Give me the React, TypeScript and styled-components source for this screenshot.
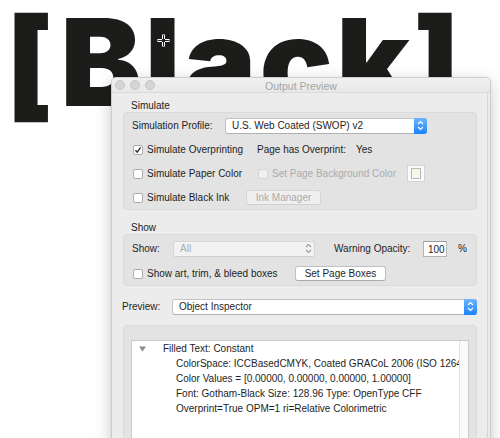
import React from 'react';
import styled, { createGlobalStyle } from 'styled-components';

/* ------------------------------ Global styles ----------------------------- */
const GlobalStyle = createGlobalStyle`
  *, *::before, *::after { box-sizing: border-box; }
  html, body { margin: 0; padding: 0; background: #fff; }
  body { overflow: hidden; }
`;

/* --------------------------------- Canvas --------------------------------- */
const Stage = styled.div`
  position: relative;
  width: 500px;
  height: 438px;
  overflow: hidden;
  background: #fff;
`;

const Headline = styled.h1`
  margin: 2px 0 0 0;
  padding-left: 6px;
  font-family: Inter, 'Liberation Sans', sans-serif;
  font-weight: 900;
  font-size: 121px;
  line-height: 120px;
  letter-spacing: 3.5px;
  color: #1c1c1a;
  white-space: nowrap;
`;

const Cursor = styled.svg`
  position: absolute;
  left: 157px;
  top: 34px;
`;

/* --------------------------------- Window --------------------------------- */
const Window = styled.section`
  position: absolute;
  left: 111px;
  top: 77px;
  width: 380px;
  height: 380px;
  display: flex;
  flex-direction: column;
  background: #ececec;
  border: 1px solid #cdcdcd;
  border-radius: 5px 5px 0 0;
  box-shadow: 0 5px 18px rgba(0, 0, 0, 0.2), 0 0 2px rgba(0, 0, 0, 0.08);
  font-family: 'Liberation Sans', Arial, sans-serif;
  font-size: 10px;
  color: #1e1e1e;
  overflow: hidden;
`;

const TitleBar = styled.header`
  height: 15px;
  flex: none;
  display: flex;
  align-items: center;
  background: linear-gradient(#f0f0f0, #e8e8e8);
  border-bottom: 1px solid #dadada;
`;

const Lights = styled.div`
  width: 50px;
  display: flex;
  gap: 5px;
  padding-left: 3px;
`;

const Light = styled.span`
  width: 10px;
  height: 10px;
  border-radius: 50%;
  background: #d5d5d5;
  border: 1px solid #c4c4c4;
`;

const Title = styled.div`
  flex: 1;
  text-align: center;
  color: #a5a5a5;
  font-size: 10.5px;
  padding-top: 1px;
`;

const Body = styled.div`
  flex: 1;
  display: flex;
  flex-direction: column;
  padding: 7px 10px 0 11px;
  margin-right: 2px;
  border-right: 1px solid #d6d6d6;
`;

const SectionLabel = styled.div`
  height: 12px;
  line-height: 12px;
  padding-left: 8px;
  color: #222;
`;

const Group = styled.div<{ $pad: string; $gap: number; $grow?: boolean }>`
  display: flex;
  flex-direction: column;
  gap: ${(p) => p.$gap}px;
  padding: ${(p) => p.$pad};
  background: #e3e3e3;
  border: 1px solid #dadada;
  border-radius: 4px;
  ${(p) => (p.$grow ? 'flex: 1; border-bottom: none; border-radius: 4px 4px 0 0;' : '')}
`;

const Spacer = styled.div<{ $h: number }>`
  height: ${(p) => p.$h}px;
  flex: none;
`;

const Row = styled.div`
  display: flex;
  align-items: center;
  height: 17px;
  white-space: nowrap;
`;

const Cell = styled.div<{ $w?: number; $ml?: number; $muted?: boolean }>`
  display: flex;
  align-items: center;
  flex: none;
  width: ${(p) => (p.$w ? `${p.$w}px` : 'auto')};
  margin-left: ${(p) => p.$ml ?? 0}px;
  color: ${(p) => (p.$muted ? '#ababab' : 'inherit')};
`;

/* -------------------------------- Controls -------------------------------- */
const Box = styled.span<{ $disabled?: boolean }>`
  width: 10px;
  height: 10px;
  flex: none;
  margin: 0 4px 0 1px;
  border-radius: 2px;
  border: 1px solid ${(p) => (p.$disabled ? '#d4d4d4' : '#acacac')};
  background: ${(p) => (p.$disabled ? '#f0f0f0' : '#fff')};
  display: flex;
  align-items: center;
  justify-content: center;
`;

const Popup = styled.div<{ $w?: number; $disabled?: boolean }>`
  display: flex;
  align-items: stretch;
  height: 16px;
  width: ${(p) => (p.$w ? `${p.$w}px` : 'auto')};
  flex: ${(p) => (p.$w ? 'none' : '1')};
  background: ${(p) => (p.$disabled ? '#f2f2f2' : '#fff')};
  border: 1px solid ${(p) => (p.$disabled ? '#d6d6d6' : '#c2c2c2')};
  border-bottom-color: ${(p) => (p.$disabled ? '#d0d0d0' : '#b0b0b0')};
  border-radius: 3px;
  color: ${(p) => (p.$disabled ? '#ababab' : '#1e1e1e')};
`;

const PopupText = styled.span`
  flex: 1;
  padding-left: 6px;
  line-height: 14px;
`;

const Stepper = styled.span<{ $blue?: boolean }>`
  width: 13px;
  flex: none;
  margin: -1px -1px -1px 0;
  display: flex;
  align-items: center;
  justify-content: center;
  border-radius: 0 3px 3px 0;
  background: ${(p) => (p.$blue ? 'linear-gradient(#6db5fb, #1b83fb)' : 'transparent')};
`;

const Button = styled.div<{ $w: number; $disabled?: boolean }>`
  width: ${(p) => p.$w}px;
  height: 15px;
  flex: none;
  display: flex;
  align-items: center;
  justify-content: center;
  background: ${(p) => (p.$disabled ? '#efefef' : '#fff')};
  border: 1px solid ${(p) => (p.$disabled ? '#d5d5d5' : '#c0c0c0')};
  border-bottom-color: ${(p) => (p.$disabled ? '#cfcfcf' : '#aaaaaa')};
  border-radius: 3px;
  color: ${(p) => (p.$disabled ? '#ababab' : '#1e1e1e')};
`;

const Field = styled.div`
  width: 24px;
  height: 16px;
  flex: none;
  padding-left: 4px;
  line-height: 15px;
  background: #fff;
  border: 1px solid #b4b4b4;
  border-top-color: #9d9d9d;
`;

const Swatch = styled.div`
  width: 18px;
  height: 17px;
  flex: none;
  display: flex;
  align-items: center;
  justify-content: center;
  background: #fafafa;
  border: 1px solid #d4d4d4;
`;

const SwatchInner = styled.span`
  width: 10px;
  height: 11px;
  background: #f6f6e6;
  border: 1px solid #b9b9b9;
`;

/* ---------------------------------- List ---------------------------------- */
const List = styled.div`
  flex: 1;
  display: flex;
  background: #fff;
  border: 1px solid #cbcbcb;
  border-bottom: none;
`;

const ListContent = styled.div`
  flex: 1;
  overflow: hidden;
`;

const ScrollTrack = styled.div`
  width: 9px;
  flex: none;
  background: #fafafa;
  border-left: 1px solid #e3e3e3;
`;

const TreeRow = styled.div<{ $indent: number }>`
  display: flex;
  align-items: center;
  height: 15px;
  line-height: 15px;
  padding-left: ${(p) => p.$indent}px;
  white-space: nowrap;
`;

const Disclosure = styled.svg`
  margin: 0 17px 0 -24px;
  flex: none;
`;

/* -------------------------------- Helpers --------------------------------- */
const Check = ({ checked, disabled }: { checked?: boolean; disabled?: boolean }) => (
  <Box $disabled={disabled}>
    {checked && (
      <svg width="8" height="8" viewBox="0 0 8 8">
        <path d="M1.4 4.2 L3.2 6.2 L6.6 1.4" fill="none" stroke="#2b2b2b" strokeWidth="1.3" />
      </svg>
    )}
  </Box>
);

const Chevrons = ({ color }: { color: string }) => (
  <svg width="7" height="11" viewBox="0 0 7 11">
    <path d="M1 4 L3.5 1.5 L6 4 M1 7 L3.5 9.5 L6 7" fill="none" stroke={color} strokeWidth="1.2" />
  </svg>
);

const details = [
  'ColorSpace: ICCBasedCMYK, Coated GRACoL 2006 (ISO 12647-2:2004)',
  'Color Values = [0.00000, 0.00000, 0.00000, 1.00000]',
  'Font: Gotham-Black Size: 128.96 Type: OpenType CFF',
  'Overprint=True OPM=1 ri=Relative Colorimetric',
];

const App = () => {
  return (
    <Stage>
      <GlobalStyle />
      <Headline>[Black]</Headline>

      <Cursor width="13" height="13" viewBox="0 0 13 13">
        <path d="M6.5 0.5 V5 M6.5 8 V12.5 M0.5 6.5 H5 M8 6.5 H12.5" stroke="#fff" strokeWidth="3" />
        <path d="M6.5 1 V5 M6.5 8 V12 M1 6.5 H5 M8 6.5 H12" stroke="#222" strokeWidth="1" />
      </Cursor>

      <Window>
        <TitleBar>
          <Lights>
            <Light />
            <Light />
            <Light />
          </Lights>
          <Title>Output Preview</Title>
          <Lights />
        </TitleBar>

        <Body>
          <SectionLabel>Simulate</SectionLabel>
          <Group $pad="4px 8px 3px 8px" $gap={7}>
            <Row>
              <Cell $w={93}>Simulation Profile:</Cell>
              <Popup $w={202}>
                <PopupText>U.S. Web Coated (SWOP) v2</PopupText>
                <Stepper $blue>
                  <Chevrons color="#fff" />
                </Stepper>
              </Popup>
            </Row>
            <Row>
              <Cell $w={125}>
                <Check checked />
                Simulate Overprinting
              </Cell>
              <Cell $w={99}>Page has Overprint:</Cell>
              <Cell>Yes</Cell>
            </Row>
            <Row>
              <Cell $w={125}>
                <Check />
                Simulate Paper Color
              </Cell>
              <Cell $w={150} $muted>
                <Check disabled />
                Set Page Background Color
              </Cell>
              <Swatch>
                <SwatchInner />
              </Swatch>
            </Row>
            <Row>
              <Cell $w={114}>
                <Check />
                Simulate Black Ink
              </Cell>
              <Button $w={75} $disabled>
                Ink Manager
              </Button>
            </Row>
          </Group>

          <Spacer $h={12} />
          <SectionLabel>Show</SectionLabel>
          <Group $pad="5px 8px 3px 8px" $gap={8}>
            <Row>
              <Cell $w={41}>Show:</Cell>
              <Popup $w={142} $disabled>
                <PopupText>All</PopupText>
                <Stepper>
                  <Chevrons color="#9c9c9c" />
                </Stepper>
              </Popup>
              <Cell $w={89} $ml={19}>
                Warning Opacity:
              </Cell>
              <Field>100</Field>
              <Cell $ml={11}>%</Cell>
            </Row>
            <Row>
              <Cell $w={163}>
                <Check />
                Show art, trim, &amp; bleed boxes
              </Cell>
              <Button $w={91}>Set Page Boxes</Button>
            </Row>
          </Group>

          <Spacer $h={12} />
          <Row>
            <Cell $w={50} $ml={-1}>
              Preview:
            </Cell>
            <Popup>
              <PopupText>Object Inspector</PopupText>
              <Stepper $blue>
                <Chevrons color="#fff" />
              </Stepper>
            </Popup>
          </Row>

          <Spacer $h={10} />
          <Group $pad="14px 7px 0 7px" $gap={0} $grow>
            <List>
              <ListContent>
                <TreeRow $indent={31}>
                  <Disclosure width="7" height="6" viewBox="0 0 7 6">
                    <path d="M0 0.5 H7 L3.5 5.5 Z" fill="#8c8c8c" />
                  </Disclosure>
                  Filled Text: Constant
                </TreeRow>
                {details.map((line) => (
                  <TreeRow key={line} $indent={44}>
                    {line}
                  </TreeRow>
                ))}
              </ListContent>
              <ScrollTrack />
            </List>
          </Group>
        </Body>
      </Window>
    </Stage>
  );
};

export default App;
